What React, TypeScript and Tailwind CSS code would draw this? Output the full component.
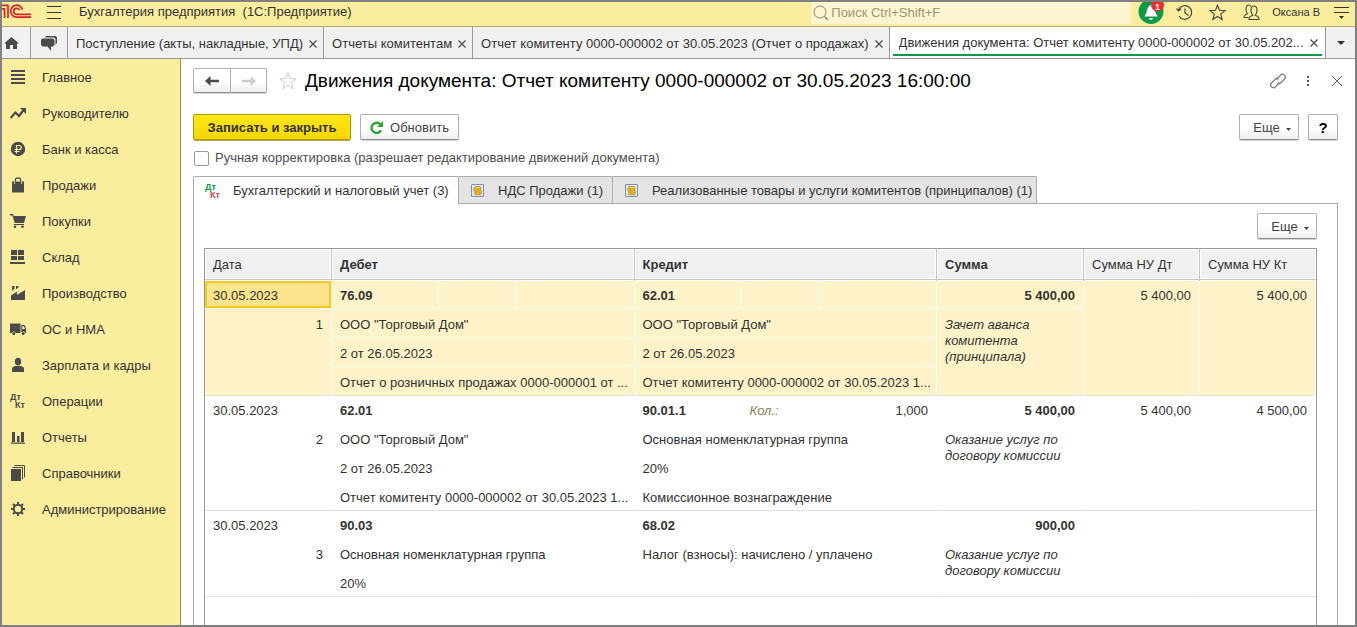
import type { ReactNode } from 'react';

type Entry = {
  no: number;
  date: string;
  debit: string;
  debitLines: string[];
  credit: string;
  creditLines: string[];
  qty?: string;
  sum: string;
  comment: string;
  nuDt?: string;
  nuKt?: string;
  active?: boolean;
};

const entries: Entry[] = [
  {
    no: 1,
    date: '30.05.2023',
    debit: '76.09',
    debitLines: ['ООО "Торговый Дом"', '2 от 26.05.2023', 'Отчет о розничных продажах 0000-000001 от ...'],
    credit: '62.01',
    creditLines: ['ООО "Торговый Дом"', '2 от 26.05.2023', 'Отчет комитенту 0000-000002 от 30.05.2023 1...'],
    sum: '5 400,00',
    comment: 'Зачет аванса комитента (принципала)',
    nuDt: '5 400,00',
    nuKt: '5 400,00',
    active: true,
  },
  {
    no: 2,
    date: '30.05.2023',
    debit: '62.01',
    debitLines: ['ООО "Торговый Дом"', '2 от 26.05.2023', 'Отчет комитенту 0000-000002 от 30.05.2023 1...'],
    credit: '90.01.1',
    creditLines: ['Основная номенклатурная группа', '20%', 'Комиссионное вознаграждение'],
    qty: '1,000',
    sum: '5 400,00',
    comment: 'Оказание услуг по договору комиссии',
    nuDt: '5 400,00',
    nuKt: '4 500,00',
  },
  {
    no: 3,
    date: '30.05.2023',
    debit: '90.03',
    debitLines: ['Основная номенклатурная группа', '20%'],
    credit: '68.02',
    creditLines: ['Налог (взносы): начислено / уплачено', ''],
    sum: '900,00',
    comment: 'Оказание услуг по договору комиссии',
  },
];

// Section icons, all on a 16x16 grid
const sections: { label: string; icon: ReactNode }[] = [
  { label: 'Главное', icon: <path d="M1 1h14v2H1zM1 5h14v2H1zM1 9h14v2H1zM1 13h14v2H1z" /> },
  {
    label: 'Руководителю',
    icon: (
      <>
        <path d="M.5 13 5.500 7.500l3.500 3.500L13.500 5" fill="none" stroke="currentColor" strokeWidth="2.200" />
        <path d="M10 3h6v6z" />
      </>
    ),
  },
  {
    label: 'Банк и касса',
    icon: (
      <>
        <circle cx="8" cy="8" r="7.200" />
        <path d="M6.500 12.500V4.500h2.700a2 2 0 0 1 0 4H4.500M4.500 10.500h5" fill="none" stroke="#fbed9e" strokeWidth="1.200" />
      </>
    ),
  },
  {
    label: 'Продажи',
    icon: (
      <>
        <path d="M2 4.500h2V7h2V4.500h4V7h2V4.500h2V15.500H2z" />
        <path d="M5.300 7V3.500C5.300 1.800 6.200.8 8 .8s2.700 1 2.700 2.700V7" fill="none" stroke="currentColor" strokeWidth="1.200" />
      </>
    ),
  },
  {
    label: 'Покупки',
    icon: (
      <>
        <path d="M0 1h3.200l.5 2H16l-2 7H4.700L2.500 2.500H0z" />
        <path d="M4 11.500h10" stroke="currentColor" />
        <circle cx="5" cy="13.800" r="1.300" />
        <circle cx="12.500" cy="13.800" r="1.300" />
      </>
    ),
  },
  { label: 'Склад', icon: <path d="M1 1h6v5H1zM8 1h6v5H8zM1 7h6v4H1zM8 7h6v4H8zM0 13h15v2H0z" /> },
  {
    label: 'Производство',
    icon: <path d="M1 15v-4.500L7 6.500V10l8-5v10zM2 1h2.500v3L2 5.800zM6 1h2.500v1.500L6 4.200z" />,
  },
  {
    label: 'ОС и НМА',
    icon: (
      <>
        <path d="M0 2.500h10.500v9.500H5.900a2.200 2.200 0 0 0-4.200 0H0zM11.300 4h3.200L16 7v5h-.9a2.200 2.200 0 0 0-3.800-.8zM12.300 5.200V8h2.700l-1-2.800z" fillRule="evenodd" />
        <circle cx="3.800" cy="12.500" r="1.500" />
        <circle cx="13.200" cy="12.500" r="1.500" />
      </>
    ),
  },
  {
    label: 'Зарплата и кадры',
    icon: (
      <>
        <ellipse cx="8" cy="4.500" rx="3.200" ry="3.800" />
        <path d="M2 15v-3.500C2 10 4 9.200 6 8.700h4c2 .5 4 1.300 4 2.800V15z" />
      </>
    ),
  },
  {
    label: 'Операции',
    icon: (
      <>
        <text x="0" y="7" fontSize="9" fontWeight="bold">Дт</text>
        <text x="5" y="15" fontSize="9" fontWeight="bold">Кт</text>
      </>
    ),
  },
  { label: 'Отчеты', icon: <path d="M2 3h3v10H2zM7 7h2.500v6H7zM11 3h3v10h-3zM1 13.500h14v1.300H1z" /> },
  {
    label: 'Справочники',
    icon: (
      <>
        <path d="M1 4h10v12H1z" />
        <path d="M2.500 2.500H12.500V14.500M4.500.5h10V12.500" fill="none" stroke="currentColor" />
      </>
    ),
  },
  {
    label: 'Администрирование',
    icon: (
      <>
        <circle cx="8" cy="8" r="4.200" fill="none" stroke="currentColor" strokeWidth="2" />
        <path d="M8 1v3M8 12v3M1 8h3M12 8h3M3 3l2 2M11 11l2 2M13 3l-2 2M5 11l-2 2" stroke="currentColor" strokeWidth="2" />
      </>
    ),
  },
];

const windows = [
  'Поступление (акты, накладные, УПД)',
  'Отчеты комитентам',
  'Отчет комитенту 0000-000002 от 30.05.2023 (Отчет о продажах)',
];

const button =
  'flex items-center justify-center rounded-xs border border-[#b0b0b0] border-b-[#8f8f8f] bg-linear-to-b from-white from-50% to-[#efefef] shadow-[0_1px_0_#d4d4d4]';

const headCell =
  'h-8 border-r border-[#c6c6c6] bg-[#f1f1f1] px-2 text-left shadow-[inset_0_-1px_#fff,inset_0_-2px_#c6c6c6,inset_0_-3px_#fff,inset_1px_1px_#fff,inset_-1px_0_#fff] last:border-r-0';

const Cross = () => (
  <svg className="size-2 shrink-0" viewBox="0 0 8 8" stroke="#4d4d4d" strokeWidth="1.200">
    <path d="M.5.5l7 7M7.500.5l-7 7" />
  </svg>
);

const Coins = () => (
  <svg className="size-[13px] shrink-0" viewBox="0 0 13 13">
    <path d="M.5.5h12v12H.5z" fill="#dfe8f2" stroke="#7f94a8" />
    <g fill="#f3c53a" stroke="#a8760c" strokeWidth=".6">
      <ellipse cx="6.800" cy="9.500" rx="3.700" ry="1.500" />
      <ellipse cx="7.200" cy="7.600" rx="3.700" ry="1.500" />
      <ellipse cx="6" cy="5.700" rx="3.700" ry="1.500" />
      <ellipse cx="6.500" cy="3.900" rx="3.700" ry="1.500" />
    </g>
  </svg>
);

const MoreButton = () => (
  <button className={`${button} h-[26px] w-[60px] gap-1.5 pt-0.5 pl-1.5 text-[#444]`}>
    Еще
    <svg className="mt-0.5 h-[3px] w-[5px]" viewBox="0 0 5 3" fill="#444">
      <path d="M0 0h5L2.500 3z" />
    </svg>
  </button>
);

const TopBar = () => (
  <header className="flex h-[25px] shrink-0 items-center border-b border-[#b5a972] bg-[#fbed9e] pb-1">
    <svg className="h-4 w-[29px] shrink-0" viewBox="0 0 29 16" fill="none" stroke="#dc1f26" strokeWidth="1.700">
      <path d="M0 4.800h2.500v9.200M0 1.300h6V14" />
      <path d="M20.500 5.800A6 6 0 1 0 14.800 13.200H29M17.500 6.300A3 3 0 1 0 14.800 10.300H29" />
    </svg>
    <button className="ml-4 flex w-3.5 flex-col gap-[5px]" aria-label="Меню">
      <span className="h-px w-full bg-[#333]" />
      <span className="h-px w-full bg-[#333]" />
      <span className="h-px w-full bg-[#333]" />
    </button>
    <span className="ml-[18px] flex-1 truncate whitespace-pre">Бухгалтерия предприятия  (1С:Предприятие)</span>
    <label className="flex h-[22px] w-80 items-center gap-0.5 self-start bg-[#fdf5cf] pl-0.5">
      <svg className="size-4 shrink-0" viewBox="0 0 16 16" fill="none" stroke="#8b866c">
        <circle cx="7" cy="7" r="6" />
        <path d="m11.500 11.500 3.500 3.500" strokeWidth="1.500" />
      </svg>
      <input className="w-full bg-transparent outline-none placeholder:text-[#9c957a]" placeholder="Поиск Ctrl+Shift+F" aria-label="Поиск" />
    </label>
    <button className="ml-1.5 h-[23px] w-[27px] self-start" aria-label="Уведомления">
      <svg className="h-[23px] w-[27px]" viewBox="0 0 27 23">
        <circle cx="14" cy="9.500" r="12.500" fill="#0e9a48" />
        <path d="M14 3c-3 1-3.800 4-4.300 7L7.500 14.500h13L18.300 10C17.800 7 17 4 14 3zM12 16h4a2 2 0 0 1-4 0z" fill="#fff" />
        <circle cx="20.500" cy="3" r="6.500" fill="#ee2b2f" />
        <text x="18" y="8" fill="#fff" fontSize="9" fontWeight="bold">1</text>
      </svg>
    </button>
    <button className="ml-3" aria-label="История">
      <svg className="size-[17px]" viewBox="0 0 17 17" fill="none" stroke="#444" strokeWidth="1.200">
        <path d="M2.500 6A6.800 6.800 0 1 1 3 12M.5 4.500l2 2.300 2.500-2M9 4.500V9l3.500 2.500" />
      </svg>
    </button>
    <button className="ml-4" aria-label="Избранное">
      <svg className="size-[17px]" viewBox="0 0 17 17" fill="none" stroke="#444" strokeWidth="1.100">
        <path d="m8.500 1.200 2 5.100 5.500.3-4.300 3.500 1.500 5.400-4.700-3-4.700 3 1.500-5.400L1 6.600l5.500-.3z" />
      </svg>
    </button>
    <button className="ml-[17px] flex items-center gap-3 text-[11px]">
      <svg className="size-[17px]" viewBox="0 0 17 17" fill="none" stroke="#444" strokeWidth="1.100">
        <path d="M6 15.500c0-2.500.8-3 3.800-4.200C8.600 10 8 8.500 8 6.200 8 3.500 9 2 11 2s3 1.500 3 4.200c0 2.300-.600 3.800-1.800 5.100 3 1.200 3.800 1.700 3.800 4.200z" />
        <path d="M8 2.500C7.500 1.500 6.800 1 6 1 4 1 3 2.500 3 5.200c0 2.300.6 3.500 1.500 4.600C1.500 11 1 11.500 1 13.500h4.500" />
      </svg>
      Оксана В
    </button>
    <button className="mr-1.5 ml-3.5" aria-label="Сервис">
      <svg className="h-3.5 w-[15px]" viewBox="0 0 15 14" fill="#333">
        <path d="M0 2h15v1H0zM0 7h15v1H0zM5 11h5l-2.500 3z" />
      </svg>
    </button>
  </header>
);

const WindowTabs = () => (
  <nav className="flex h-8 shrink-0 border-b border-[#999] bg-[#f1f1f1]">
    <button className="flex w-[29px] items-center border-r border-[#999] pl-0.5" aria-label="Начальная страница">
      <svg className="h-3 w-[15px]" viewBox="0 0 15 12" fill="#4a4a4a">
        <path d="M7.500 0 15 6.500h-2V12H9V8H6v4H2V6.500H0z" />
      </svg>
    </button>
    <button className="flex w-[37px] items-center justify-center border-r border-[#999] pt-0.5" aria-label="Обсуждения">
      <svg className="h-[15px] w-4" viewBox="0 0 16 15" fill="#4a4a4a">
        <path d="M4 1.500 5.200 0H14.500L16 1.500V7l-1.500 2V3L13 1.500z" />
        <path d="M1.500 2.500h10.500L13.500 4v5L12 10.500H10V15L6.500 10.500h-5L0 9V4z" />
      </svg>
    </button>
    {windows.map((title) => (
      <button key={title} className="flex shrink-0 items-center gap-1.5 border-r border-[#999] pt-0.5 pr-1.5 pl-2">
        <span>{title}</span>
        <Cross />
      </button>
    ))}
    <button className="flex min-w-0 flex-1 border-r border-[#999] bg-white px-[3px]">
      <span className="flex h-[29px] w-full items-center justify-between gap-1 border-b-2 border-[#0e9a48] pt-1 pr-1 pl-1.5">
        <span className="truncate">Движения документа: Отчет комитенту 0000-000002 от 30.05.202...</span>
        <Cross />
      </span>
    </button>
    <button className="flex w-[29px] items-center justify-center" aria-label="Список окон">
      <svg className="h-1 w-2" viewBox="0 0 8 4" fill="#333">
        <path d="M0 0h8L4 4z" />
      </svg>
    </button>
  </nav>
);

const Sidebar = () => (
  <aside className="w-[179px] shrink-0 border-r border-[#9b9152] bg-[#fbed9e]">
    {sections.map(({ label, icon }) => (
      <a key={label} href="#" className="flex h-9 items-center gap-4 pl-2">
        <svg className="size-4 shrink-0 text-[#4a4a4a]" viewBox="0 0 16 16" fill="currentColor">
          {icon}
        </svg>
        <span className="pt-0.5">{label}</span>
      </a>
    ))}
  </aside>
);

const EntryRows = ({ entry }: { entry: Entry }) => {
  const { active } = entry;
  const rows = entry.debitLines.length;
  const line = active ? 'border-white' : 'border-transparent';
  const first = `border-r border-b px-2 pt-0.5 truncate ${line}`;
  // the last line of an entry carries the grey separator
  const last = `border-r border-b border-b-[#e2e2e2] ${active ? 'border-r-white' : 'border-r-transparent'}`;
  const tall = `${last} px-2 text-right align-top`;
  const analytics = 'pt-1 pl-2 pr-0.5 truncate';

  return (
    <tbody className={active ? 'bg-[#fef2c8]' : 'bg-white'}>
      <tr>
        <td className={`${first} h-7 ${active ? 'bg-[#fbe48c] shadow-[inset_0_0_0_2px_#f9c81e]' : ''}`}>{entry.date}</td>
        <td className={`${first} font-bold`}>{entry.debit}</td>
        <td className={first} />
        <td className={first} />
        <td className={`${first} font-bold`}>{entry.credit}</td>
        <td className={`${first} text-[#857d58] italic`}>{entry.qty && 'Кол.:'}</td>
        <td className={`${first} text-right`}>{entry.qty}</td>
        <td className={`${first} text-right font-bold`}>{entry.sum}</td>
        <td rowSpan={rows + 1} className={`${tall} pt-[7px]`}>{entry.nuDt}</td>
        <td rowSpan={rows + 1} className={`${tall} pt-[7px]`}>{entry.nuKt}</td>
      </tr>
      {entry.debitLines.map((debit, i) => {
        const edge = i === rows - 1 ? last : `border-r border-b ${line}`;
        return (
          <tr key={i}>
            {i === 0 && <td rowSpan={rows} className={`${tall} pt-2`}>{entry.no}</td>}
            <td colSpan={3} className={`h-[29px] ${analytics} ${edge}`}>{debit}</td>
            <td colSpan={3} className={`${analytics} ${edge}`}>{entry.creditLines[i]}</td>
            {i === 0 && (
              <td rowSpan={rows} className={`${last} px-2 pt-2 align-top italic`}>{entry.comment}</td>
            )}
          </tr>
        );
      })}
    </tbody>
  );
};

export default function App() {
  return (
    <div className="flex h-screen flex-col overflow-hidden border-2 border-[#808080] bg-white font-['Liberation_Sans',Arial,sans-serif] text-[13px] leading-4 text-[#333]">
      <TopBar />
      <WindowTabs />
      <div className="flex min-h-0 flex-1">
        <Sidebar />
        <main className="flex min-w-0 flex-1 flex-col pr-[17px] pl-3">
          <div className="flex h-[43px] shrink-0 items-center">
            <div className="flex">
              <button className={`${button} h-[25px] w-[38px] rounded-r-none`} aria-label="Назад">
                <svg className="h-2.5 w-3.5" viewBox="0 0 14 10" fill="#4a4a4a">
                  <path d="M0 5 5.500 0v3.800H14v2.400H5.500V10z" />
                </svg>
              </button>
              <button className={`${button} h-[25px] w-9 rounded-l-none border-l-0`} aria-label="Вперед">
                <svg className="h-2.5 w-3.5" viewBox="0 0 14 10" fill="#ccc">
                  <path d="M14 5 8.500 0v3.800H0v2.400h8.500V10z" />
                </svg>
              </button>
            </div>
            <button className="ml-3" aria-label="В избранное">
              <svg className="size-[18px]" viewBox="0 0 18 18" fill="none" stroke="#ccc">
                <path d="m9 .8 2.200 5.700 6 .4-4.700 3.800 1.600 6L9 13.400l-5.100 3.300 1.600-6L.8 6.900l6-.4z" />
              </svg>
            </button>
            <h1 className="ml-2 min-w-0 flex-1 truncate text-[19px] leading-6 text-black">
              Движения документа: Отчет комитенту 0000-000002 от 30.05.2023 16:00:00
            </h1>
            <button aria-label="Ссылка">
              <svg className="size-4" viewBox="0 0 16 16" fill="none" stroke="#777" strokeWidth="1.200">
                <path d="M6.500 6.500 10.500 2.200a2.700 2.700 0 0 1 4 3.800L11 9.600a2.700 2.700 0 0 1-3.600.3M9.500 9.500 5.500 13.800a2.700 2.700 0 0 1-4-3.800L5 6.400a2.700 2.700 0 0 1 3.600-.3" />
              </svg>
            </button>
            <button className="ml-5" aria-label="Действия">
              <svg className="h-3 w-1" viewBox="0 0 4 12" fill="#555">
                <path d="M1 1h2v2H1zM1 5h2v2H1zM1 9h2v2H1z" />
              </svg>
            </button>
            <button className="-mr-1 ml-[22px]" aria-label="Закрыть">
              <svg className="size-2.5" viewBox="0 0 10 10" stroke="#666">
                <path d="m0 0 10 10M10 0 0 10" />
              </svg>
            </button>
          </div>

          <div className="mt-3 flex shrink-0 items-center">
            <button className="h-[26px] w-[158px] rounded-xs border border-[#b09a00] bg-linear-to-b from-[#ffe718] to-[#f5d600] pt-0.5 font-bold shadow-[0_1px_0_#b8a84a]">
              Записать и закрыть
            </button>
            <button className={`${button} ml-[9px] h-[26px] w-[99px] gap-[7px] text-[#444]`}>
              <svg className="size-[13px]" viewBox="0 0 12 12">
                <path d="M9.500 3A4.700 4.700 0 1 0 10.300 8.500" fill="none" stroke="#2fa336" strokeWidth="2.200" />
                <path d="M12 0v5.500H6.500z" fill="#2fa336" />
              </svg>
              <span className="pt-0.5">Обновить</span>
            </button>
            <div className="ml-auto flex gap-[9px]">
              <MoreButton />
              <button className={`${button} h-[26px] w-[30px] pt-0.5 text-[15px] font-bold text-black`}>?</button>
            </div>
          </div>

          <label className="mt-2.5 flex shrink-0 items-center gap-1.5 pl-px text-[#4d4d4d]">
            <input type="checkbox" className="size-[15px] appearance-none rounded-xs border border-[#999] bg-white" />
            Ручная корректировка (разрешает редактирование движений документа)
          </label>

          <div className="mt-2.5 flex h-7 shrink-0 border-b border-[#adadad]" role="tablist">
            <button role="tab" aria-selected className="-mb-px flex w-[266px] items-center gap-3 rounded-t-xs border border-b-0 border-[#adadad] bg-white pl-[11px]">
              <svg className="size-4 shrink-0" viewBox="0 0 16 16" fontSize="9" fontWeight="bold">
                <text x="0" y="7" fill="#0e9a48">Дт</text>
                <text x="5" y="15" fill="#dc4444">Кт</text>
              </svg>
              Бухгалтерский и налоговый учет (3)
            </button>
            <button role="tab" className="flex w-[154px] items-center gap-3.5 border-t border-r border-[#adadad] bg-[#e4e4e4] pl-3">
              <Coins />
              <span className="pt-0.5">НДС Продажи (1)</span>
            </button>
            <button role="tab" className="flex w-[424px] items-center gap-3.5 rounded-tr-xs border-t border-r border-[#adadad] bg-[#e4e4e4] pl-3">
              <Coins />
              <span className="pt-0.5">Реализованные товары и услуги комитентов (принципалов) (1)</span>
            </button>
          </div>

          <section className="flex min-h-0 flex-1 flex-col border-x border-[#adadad] pt-[9px] pr-5 pl-2.5">
            <div className="flex shrink-0 justify-end">
              <MoreButton />
            </div>
            <div className="mt-[9px] min-h-0 flex-1 overflow-hidden border border-b-0 border-[#999]">
              <table className="w-full table-fixed border-separate border-spacing-0">
                <colgroup>
                  <col className="w-[127px]" />
                  <col className="w-[107px]" />
                  <col className="w-[77px]" />
                  <col />
                  <col className="w-[107px]" />
                  <col className="w-[77px]" />
                  <col />
                  <col className="w-[147px]" />
                  <col className="w-[116px]" />
                  <col className="w-[116px]" />
                </colgroup>
                <thead>
                  <tr>
                    <th className={`${headCell} font-normal`}>Дата</th>
                    <th colSpan={3} className={`${headCell} font-bold`}>Дебет</th>
                    <th colSpan={3} className={`${headCell} font-bold`}>Кредит</th>
                    <th className={`${headCell} font-bold`}>Сумма</th>
                    <th className={`${headCell} font-normal`}>Сумма НУ Дт</th>
                    <th className={`${headCell} font-normal`}>Сумма НУ Кт</th>
                  </tr>
                </thead>
                {entries.map((entry) => (
                  <EntryRows key={entry.no} entry={entry} />
                ))}
              </table>
            </div>
          </section>
        </main>
      </div>
    </div>
  );
}
